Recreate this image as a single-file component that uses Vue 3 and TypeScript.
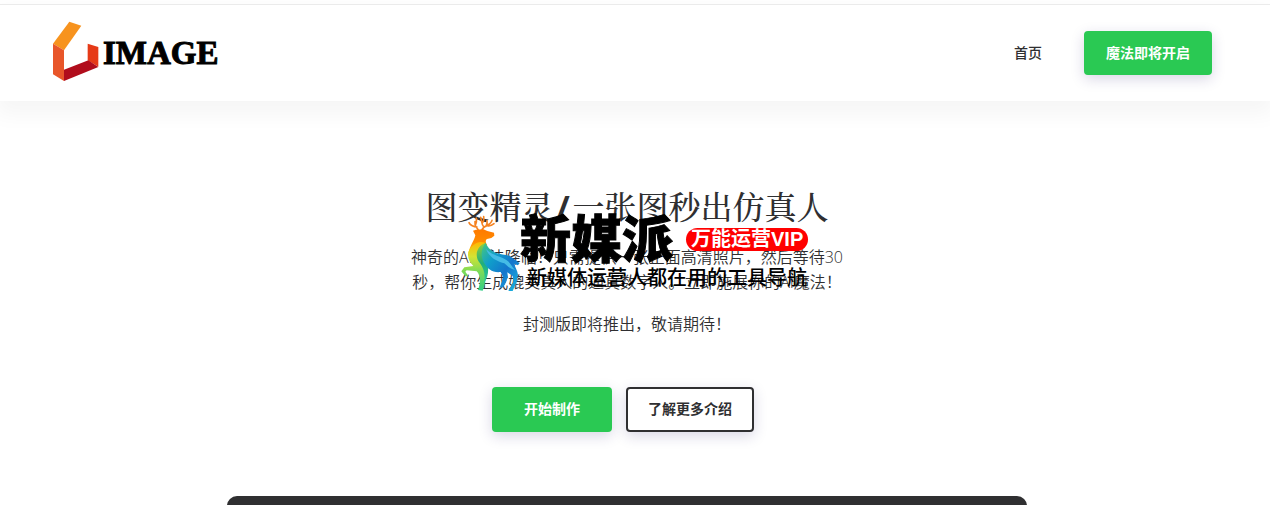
<script setup lang="ts">
const title: string[] = ['图变精灵', '一张图秒出仿真人']
const intro: string =
  '神奇的AI魔法降临！只需提供一张正面高清照片，然后等待30秒，帮你生成媲美真人的逼真数字人。立即施展你的AI魔法！'
const notice: string = '封测版即将推出，敬请期待！'
</script>

<template>
  <div class="page">
    <header class="header">
      <a class="brand" href="#" aria-label="IMAGE">
        <svg class="brand-mark" viewBox="36 60 144 183" aria-hidden="true">
          <polygon points="88,62 124,74 72,148 39,128" fill="#f7931e" />
          <polygon points="39,128 72,148 72,240 39,220" fill="#e8562a" />
          <polygon points="143,128 175,138 175,197 143,178" fill="#e63a17" />
          <polygon points="72,206 145,178 175,198 72,240" fill="#b10d1c" />
        </svg>
        <span class="brand-name">IMAGE</span>
      </a>
      <nav class="nav">
        <a class="nav-link" href="#">首页</a>
        <button class="btn primary nav-btn" type="button">魔法即将开启</button>
      </nav>
    </header>

    <main class="hero">
      <div class="copy">
        <h1 class="title">{{ title[0] }}<span class="slash">/</span>{{ title[1] }}</h1>
        <p class="intro">{{ intro }}</p>
        <p class="intro">{{ notice }}</p>

        <aside class="watermark">
          <svg class="deer" viewBox="30 18 180 234" aria-hidden="true">
            <defs>
              <linearGradient id="deerHead" x1="0" y1="0" x2="0" y2="1">
                <stop offset="0" stop-color="#ff7a00" />
                <stop offset="0.5" stop-color="#ff8a00" />
                <stop offset="1" stop-color="#ffc21a" />
              </linearGradient>
              <linearGradient id="deerChest" x1="0" y1="0" x2="0" y2="1">
                <stop offset="0" stop-color="#ffb800" />
                <stop offset="0.3" stop-color="#d4e334" />
                <stop offset="0.6" stop-color="#7edb56" />
                <stop offset="1" stop-color="#2fcf86" />
              </linearGradient>
              <linearGradient id="deerLeaf" x1="0" y1="0" x2="0" y2="1">
                <stop offset="0" stop-color="#8fcf3e" />
                <stop offset="0.5" stop-color="#1fae7c" />
                <stop offset="1" stop-color="#2bc9a0" />
              </linearGradient>
              <linearGradient id="deerBody" x1="0" y1="0" x2="1" y2="1">
                <stop offset="0" stop-color="#49c978" />
                <stop offset="0.3" stop-color="#109fca" />
                <stop offset="0.6" stop-color="#1475cc" />
                <stop offset="1" stop-color="#19bde0" />
              </linearGradient>
            </defs>
            <g fill="none" stroke="#f58220" stroke-width="5" stroke-linecap="round" stroke-linejoin="round">
              <path d="M85 68 C84 58 72 58 75 41 M81 57 C72 57 60 52 57 44 M77 49 C80 43 80 38 79 30" />
              <path d="M96 66 C99 51 122 54 126 37 M102 57 C94 50 96 40 92 28 M96 45 C103 40 102 33 101 26 M112 53 C119 55 126 52 132 47 M108 55 C113 48 112 43 111 38" />
            </g>
            <path fill="url(#deerHead)" d="M78 65 L100 64 L112 69 L132 74 L133 83 L124 90 L111 93 C105 97 107 104 112 112 L90 122 L55 136 C60 112 73 98 76 82 L69 68 Z" />
            <path fill="url(#deerChest)" d="M107 106 C88 94 64 110 55 132 C51 150 59 162 70 174 L43 178 L34 190 L46 205 L55 204 L46 191 L50 187 L80 190 C92 202 92 222 84 246 L98 248 C107 230 108 200 104 178 L107 108 Z" />
            <path fill="url(#deerLeaf)" d="M107 105 C81 113 71 143 90 166 C102 182 108 202 101 228 C117 204 116 182 112 165 Z" />
            <path fill="url(#deerBody)" d="M107 104 C117 130 140 137 168 141 C188 145 194 157 209 165 L204 172 L194 168 C194 178 203 188 204 200 L200 222 L188 249 L175 249 L190 222 L188 204 L172 193 L174 208 L160 237 L149 239 L160 208 L152 192 C128 195 112 182 102 164 C90 144 94 120 107 104 Z" />
            <path fill="#45bce6" d="M108 123 C127 143 147 142 169 156 C181 163 185 175 195 186 C179 182 173 175 163 166 C141 160 119 150 108 123 Z" />
          </svg>
          <div class="mark-text">
            <div class="mark-row">
              <strong class="mark-name">新媒派</strong>
              <span class="pill">万能运营VIP</span>
            </div>
            <span class="mark-sub">新媒体运营人都在用的工具导航</span>
          </div>
        </aside>
      </div>

      <div class="actions">
        <button class="btn primary" type="button">开始制作</button>
        <button class="btn outline" type="button">了解更多介绍</button>
      </div>
      <section class="preview"></section>
    </main>
  </div>
</template>

<style>
body {
  margin: 0;
  background: #fff;
}
</style>

<style scoped>
.page {
  height: 100vh;
  overflow: hidden;
  box-sizing: border-box;
  padding-top: 4px;
  background: #fff;
  color: #2f2f31;
  font-family: "Open Sans", "Noto Sans CJK SC", sans-serif;
}
.header {
  display: flex;
  align-items: center;
  justify-content: space-between;
  height: 96px;
  padding: 0 58px 0 52px;
  border-top: 1px solid #ebebeb;
  box-shadow: 0 10px 20px 4px rgba(0, 0, 0, 0.04);
}
.brand {
  display: flex;
  align-items: center;
  gap: 3px;
  color: #000;
  text-decoration: none;
}
.brand-mark {
  width: 48px;
  height: 61px;
  margin-bottom: 4px;
}
.brand-name {
  font: bold 33px/40px "Liberation Serif", serif;
  -webkit-text-stroke: 1px #000;
}
.nav {
  display: flex;
  align-items: center;
  gap: 42px;
}
.nav-link {
  padding-bottom: 2px;
  color: #2f2f31;
  font-size: 14px;
  font-weight: 500;
  text-decoration: none;
}
.btn {
  box-sizing: border-box;
  min-width: 120px;
  height: 45px;
  padding: 0 20px 3px;
  border: 2px solid #2f2f31;
  border-radius: 4px;
  background: #fff;
  box-shadow: 0 4px 14px rgba(40, 30, 110, 0.18);
  color: #2f2f31;
  font-family: inherit;
  font-size: 14px;
  font-weight: 700;
  cursor: pointer;
}
.primary {
  border-color: #2ac953;
  background: #2ac953;
  color: #fff;
}
.nav-btn {
  height: 44px;
}
.hero {
  display: flex;
  flex-direction: column;
  align-items: center;
  padding: 82px 16px 0 0;
}
.copy {
  position: relative;
  width: 440px;
  text-align: center;
}
.title {
  margin: 0 0 12px;
  font-family: "Liberation Serif", "Noto Serif CJK SC", "Noto Serif SC", "Noto Sans CJK SC", serif;
  font-size: 32px;
  font-weight: 500;
  line-height: 50px;
  white-space: nowrap;
}
.slash {
  padding: 0 3px;
  font-family: "Open Sans", sans-serif;
  font-weight: 700;
  line-height: 32px;
}
.intro {
  margin: 0 0 17px;
  font-size: 16px;
  font-weight: 350;
  line-height: 25px;
}
.watermark {
  position: absolute;
  top: 31px;
  left: 53px;
  display: flex;
  color: #000;
  text-align: left;
  white-space: nowrap;
}
.deer {
  width: 60px;
  height: 78px;
}
.mark-row {
  display: flex;
  align-items: center;
  gap: 13px;
  height: 51px;
}
.mark-name {
  font-size: 51px;
  font-weight: 900;
  line-height: 50px;
  padding-bottom: 3px;
  -webkit-text-stroke: 1px #000;
}
.pill {
  padding: 0 5px;
  border-radius: 12px;
  background: #f00;
  color: #fff;
  font-family: "Liberation Sans", "Noto Sans CJK SC", sans-serif;
  font-size: 20px;
  font-weight: 700;
  line-height: 23px;
}
.mark-sub {
  display: block;
  padding-left: 7px;
  font-size: 20px;
  font-weight: 500;
  line-height: 26px;
}
.actions {
  display: flex;
  gap: 14px;
  margin: 33px 8px 64px 0;
}
.preview {
  width: 800px;
  max-width: 90%;
  height: 420px;
  border-radius: 10px;
  background: #2f2f31;
}
</style>
